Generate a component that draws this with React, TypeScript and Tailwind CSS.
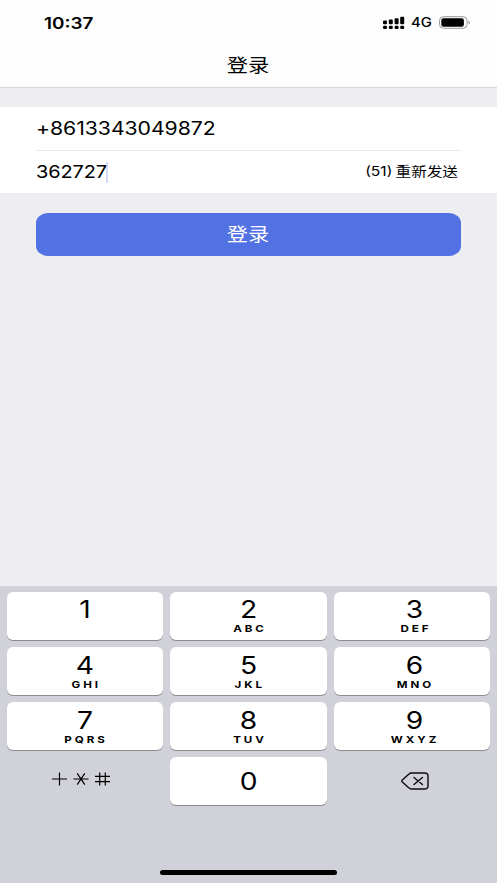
import { useState } from 'react';

const keys = [
  { digit: '1', letters: '', spacing: 'pt-[5px]' },
  { digit: '2', letters: 'ABC', spacing: 'pt-[5px]' },
  { digit: '3', letters: 'DEF', spacing: 'pt-[5px] pl-[5px]' },
  { digit: '4', letters: 'GHI', spacing: 'pt-[6px]' },
  { digit: '5', letters: 'JKL', spacing: 'pt-[6px]' },
  { digit: '6', letters: 'MNO', spacing: 'pt-[6px] pl-[5px]' },
  { digit: '7', letters: 'PQRS', spacing: 'pt-[6px]' },
  { digit: '8', letters: 'TUV', spacing: 'pt-[6px]' },
  { digit: '9', letters: 'WXYZ', spacing: 'pt-[6px] pl-[5px]' },
];

function StatusBar() {
  return (
    <div className="flex h-[44px] items-center justify-between pt-[1px] pr-[26px] pl-[44px]">
      <span className="inline-block origin-left scale-x-[1.18] text-[16px] leading-none font-semibold">10:37</span>
      <div className="flex items-center">
        <svg className="mr-[6px]" width="22" height="14" viewBox="0 0 22 14" fill="#000">
          <rect x="0" y="4.6" width="4" height="3.6" rx="1" />
          <rect x="5.8" y="3.6" width="4" height="4.6" rx="1" />
          <rect x="11.6" y="2.2" width="4" height="6" rx="1" />
          <rect x="17.2" y="0.8" width="4" height="7.4" rx="1" />
          <rect x="0" y="9.8" width="4" height="3.1" rx="1.2" />
          <rect x="5.8" y="9.8" width="4" height="3.1" rx="1.2" />
          <rect x="11.6" y="9.8" width="4" height="3.1" rx="1.2" />
          <rect x="17.2" y="9.8" width="4" height="3.1" rx="1.2" />
        </svg>
        <span className="mr-[10px] inline-block origin-left scale-x-[1.14] text-[13px] leading-none font-medium">4G</span>
        <svg width="32" height="13" viewBox="0 0 32 13">
          <rect x="0.5" y="0.7" width="27.6" height="11.6" rx="4" fill="none" stroke="#999" />
          <rect x="2.3" y="2.3" width="22.6" height="8.4" rx="2.2" fill="#000" />
          <path d="M29.6 4.6c1.5.5 1.5 3.5 0 4z" fill="#888" />
        </svg>
      </div>
    </div>
  );
}

export default function App() {
  const [code, setCode] = useState('362727');

  const addDigit = (digit: string) => setCode((prev) => (prev + digit).slice(0, 6));

  return (
    <div className="flex h-[883px] w-[497px] flex-col overflow-hidden bg-[#ededf2] font-['Inter','Noto_Sans_CJK_SC',sans-serif] text-black">
      <header className="h-[88px] border-b border-[#d9d9dc] bg-[#fdfdfd]">
        <StatusBar />
        <h1 className="flex h-[43px] items-center justify-center pr-[1px]">
          <span className="inline-block scale-x-[1.18] text-[18px] leading-none">登录</span>
        </h1>
      </header>

      <div className="mt-[19px] h-[86px] bg-white px-[36px]">
        <div className="flex h-[44px] items-center border-b border-[#e8e8eb]">
          <span className="inline-block origin-left scale-x-[1.18] text-[18px] leading-none tracking-[-0.05px]">+8613343049872</span>
        </div>
        <div className="flex h-[42px] items-center justify-between">
          <div className="flex items-center">
            <div className="w-[70px]">
              <span className="inline-block origin-left scale-x-[1.14] text-[17.5px] leading-none tracking-[-0.1px]">{code}</span>
            </div>
            <span className="h-[21px] w-[2px] bg-[#d5dafa]" />
          </div>
          <button className="mr-[1px] mb-px inline-block origin-right scale-x-[1.2] pr-[2px] text-[13px] leading-none [word-spacing:-1px]">
            (51) 重新发送
          </button>
        </div>
      </div>

      <button className="mx-[36px] mt-[20px] flex h-[43px] items-center justify-center rounded-[12px/10px] bg-[#5271e2] pt-[1px] pr-[1px] text-white">
        <span className="inline-block scale-x-[1.18] text-[18px] leading-none">登录</span>
      </button>

      <div className="mt-auto flex h-[297px] flex-col bg-[#d1d1d9] px-[7px] pt-[6px]">
        <div className="grid grid-cols-3 gap-[7px]">
          {keys.map((key) => (
            <button
              key={key.digit}
              onClick={() => addDigit(key.digit)}
              className={`flex h-[48px] flex-col items-center rounded-[6px] bg-white shadow-[0_1px_0_#8b8b90] ${key.spacing}`}
            >
              <span className="inline-block h-[24px] scale-x-[1.15] text-[24.5px] leading-[24px]">{key.digit}</span>
              <span className="mt-[2px] inline-block scale-x-[1.22] pl-[2px] text-[9.5px] leading-[11px] font-bold tracking-[2.4px]">
                {key.letters}
              </span>
            </button>
          ))}
          <button className="flex h-[48px] items-center justify-center">
            <svg className="mr-[9px] mb-[4px]" width="60" height="16" viewBox="0 0 60 16" fill="none" stroke="#000" strokeWidth="1.2">
              <path d="M1 8h15M8.5 1.6v12.8" />
              <path d="M22.5 8h15M26.2 2.4l7.6 11.2M33.8 2.4l-7.6 11.2" />
              <path d="M44 5.4h15M44 10.6h15M48.7 1.6v12.8M54.3 1.6v12.8" />
            </svg>
          </button>
          <button
            onClick={() => addDigit('0')}
            className="flex h-[48px] items-center justify-center rounded-[6px] bg-white shadow-[0_1px_0_#8b8b90]"
          >
            <span className="inline-block scale-x-[1.15] text-[24.5px] leading-none">0</span>
          </button>
          <button onClick={() => setCode(code.slice(0, -1))} className="flex h-[48px] items-center justify-center">
            <svg className="ml-[7px]" width="28" height="18" viewBox="0 0 28 18" fill="none" stroke="#0a0a0f" strokeWidth="1.4" strokeLinejoin="round">
              <path d="M10.2 1H23.5Q27 1 27 4V14Q27 17 23.5 17H10.2Q9 17 8 16.1L1.3 10Q.4 9 1.3 8L8 1.9Q9 1 10.2 1Z" />
              <path d="M13 5.5l8.4 7M21.4 5.5l-8.4 7" strokeLinecap="round" />
            </svg>
          </button>
        </div>
        <div className="mt-auto mb-[8px] ml-[153px] h-[5px] w-[177px] rounded-full bg-black" />
      </div>
    </div>
  );
}
